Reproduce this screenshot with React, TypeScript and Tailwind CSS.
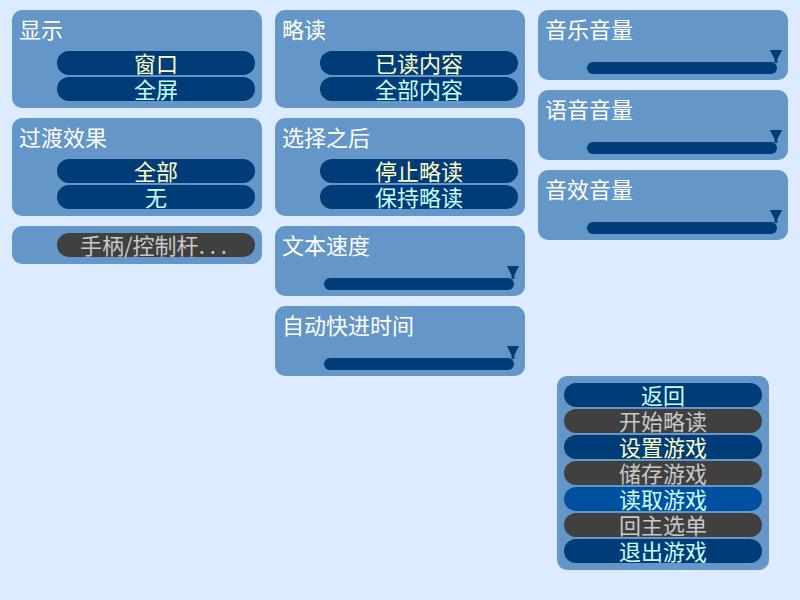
import React from "react";

const FONT = { fontFamily: '"Noto Sans CJK SC", "Noto Sans", sans-serif' };

type Kind = "normal" | "selected" | "disabled" | "hover";

function Btn({ label, kind = "normal" }: { label: React.ReactNode; kind?: Kind }) {
  const cls =
    kind === "disabled"
      ? "bg-[#404040] text-[#c8c8c8]"
      : kind === "hover"
      ? "bg-[#0050a0] text-[#c8ffff]"
      : kind === "selected"
      ? "bg-[#003c78] text-[#ffffc8]"
      : "bg-[#003c78] text-[#c8ffff]";
  return (
    <div
      className={`w-[198px] h-[24px] rounded-full flex items-center justify-center pb-[3px] text-[22px] leading-[20px] whitespace-nowrap ${cls}`}
    >
      {label}
    </div>
  );
}

function Title({ children }: { children: React.ReactNode }) {
  return <div className="text-white text-[22px] leading-[22px] whitespace-nowrap">{children}</div>;
}

function ChoicePanel({ title, items }: { title: string; items: { label: string; kind?: Kind }[] }) {
  return (
    <div className="w-[250px] h-[98px] bg-[#6496c8] rounded-[10px] p-[7px] flex flex-col">
      <Title>{title}</Title>
      <div className="mt-[12px] flex flex-col items-end gap-[2px]">
        {items.map((it) => (
          <Btn key={it.label} label={it.label} kind={it.kind} />
        ))}
      </div>
    </div>
  );
}

function SliderPanel({ title }: { title: string }) {
  return (
    <div className="w-[250px] h-[70px] bg-[#6496c8] rounded-[10px] pt-[7px] pl-[7px] pr-[6px] pb-[6px] flex flex-col justify-between">
      <Title>{title}</Title>
      <div className="flex justify-end">
        <div className="relative w-[195px] h-[24px]">
          <div className="absolute left-0 bottom-0 w-[190px] h-[12px] rounded-full bg-[#003c78]" />
          <svg className="absolute right-0 top-0" width="12" height="13" viewBox="0 0 12 13">
            <polygon points="0,0 12,0 7.5,9 7.5,13 4.5,13 4.5,9" fill="#003c78" />
          </svg>
        </div>
      </div>
    </div>
  );
}

export default function App() {
  return (
    <div className="relative w-[800px] h-[600px] bg-[#dcebff] overflow-hidden" style={FONT}>
      <div className="flex gap-[13px] pl-[12px] pt-[10px]">
        <div className="flex flex-col gap-[10px]">
          <ChoicePanel
            title="显示"
            items={[
              { label: "窗口", kind: "selected" },
              { label: "全屏" },
            ]}
          />
          <ChoicePanel
            title="过渡效果"
            items={[
              { label: "全部", kind: "selected" },
              { label: "无" },
            ]}
          />
          <div className="w-[250px] h-[38px] bg-[#6496c8] rounded-[10px] p-[7px] flex justify-end">
            <Btn
              kind="disabled"
              label={
                <span>
                  手柄/控制杆<span className="tracking-[5px]">...</span>
                </span>
              }
            />
          </div>
        </div>
        <div className="flex flex-col gap-[10px]">
          <ChoicePanel
            title="略读"
            items={[
              { label: "已读内容", kind: "selected" },
              { label: "全部内容" },
            ]}
          />
          <ChoicePanel
            title="选择之后"
            items={[
              { label: "停止略读", kind: "selected" },
              { label: "保持略读" },
            ]}
          />
          <SliderPanel title="文本速度" />
          <SliderPanel title="自动快进时间" />
        </div>
        <div className="flex flex-col gap-[10px]">
          <SliderPanel title="音乐音量" />
          <SliderPanel title="语音音量" />
          <SliderPanel title="音效音量" />
        </div>
      </div>

      <div className="absolute right-[31px] bottom-[30px] w-[212px] bg-[#6496c8] rounded-[10px] p-[7px] flex flex-col gap-[2px]">
        <Btn label="返回" />
        <Btn label="开始略读" kind="disabled" />
        <Btn label="设置游戏" kind="selected" />
        <Btn label="储存游戏" kind="disabled" />
        <Btn label="读取游戏" kind="hover" />
        <Btn label="回主选单" kind="disabled" />
        <Btn label="退出游戏" />
      </div>
    </div>
  );
}
